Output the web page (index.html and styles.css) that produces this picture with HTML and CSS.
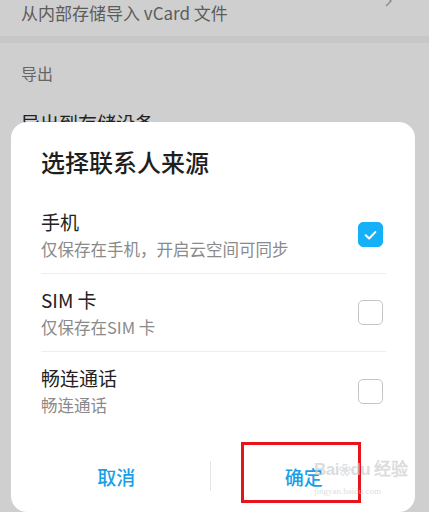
FILE: index.html
```html
<!DOCTYPE html>
<html lang="zh-CN">
<head>
    <meta charset="UTF-8">
    <meta name="viewport" content="width=device-width, initial-scale=1.0">
    <title>选择联系人来源</title>
    <link rel="stylesheet" href="styles.css">
</head>
<body>
    <div class="page">
        <div class="list-item import-row">
            <span>从内部存储导入 vCard 文件</span>
            <svg class="chevron" width="10" height="10" viewBox="0 0 10 10">
                <path d="M2 -4 L7 1 L2 6" fill="none" stroke="#8a8a8a" stroke-width="1.4"/>
            </svg>
        </div>
        <div class="gap-strip"></div>
        <div class="section-label">导出</div>
        <div class="list-item export-row">导出到存储设备</div>
    </div>

    <div class="dialog">
        <div class="dialog-title">选择联系人来源</div>

        <div class="option">
            <div class="option-text">
                <div class="option-name">手机</div>
                <div class="option-desc">仅保存在手机，开启云空间可同步</div>
            </div>
            <span class="checkbox checked">
                <svg width="24" height="24" viewBox="0 0 24 24">
                    <path d="M7 12.3 L10.6 15.6 L17 9" fill="none" stroke="#fff" stroke-width="2.2" stroke-linecap="round" stroke-linejoin="round"/>
                </svg>
            </span>
        </div>

        <div class="option">
            <div class="option-text">
                <div class="option-name">SIM 卡</div>
                <div class="option-desc">仅保存在SIM 卡</div>
            </div>
            <span class="checkbox"></span>
        </div>

        <div class="option last">
            <div class="option-text">
                <div class="option-name">畅连通话</div>
                <div class="option-desc">畅连通话</div>
            </div>
            <span class="checkbox"></span>
        </div>

        <div class="dialog-footer">
            <button class="dialog-btn">取消</button>
            <span class="btn-divider"></span>
            <button class="dialog-btn">确定</button>
        </div>
    </div>

    <div class="highlight"></div>
    <div class="watermark">
        <div class="wm-logo">Bai<span class="paw">❀</span>du 经验</div>
        <div class="wm-url">jingyan.baidu.com</div>
    </div>
</body>
</html>
```

FILE: styles.css
```css
body {
    margin: 0;
    font-family: "Noto Sans CJK SC", "Noto Sans", sans-serif;
    background-color: #cfcfcf;
    width: 429px;
    height: 512px;
    overflow: hidden;
    position: relative;
}
.page {
    display: flex;
    flex-direction: column;
}
.list-item {
    padding: 0 21px;
    display: flex;
    align-items: center;
    justify-content: space-between;
}
.import-row {
    height: 36px;
    font-size: 17px;
    color: #5c5c5c;
    margin-top: -6px;
    padding-bottom: 6px;
    box-sizing: content-box;
}
.chevron {
    align-self: flex-start;
    margin-top: 6px;
    margin-right: 14px;
}
.gap-strip {
    height: 7px;
    background-color: #c7c7c7;
}
.section-label {
    padding: 0 21px;
    height: 50px;
    line-height: 50px;
    margin-top: 5px;
    font-size: 16px;
    color: #666;
}
.export-row {
    height: 36px;
    font-size: 19px;
    color: #222;
    margin-top: 6px;
}
.dialog {
    position: absolute;
    left: 11px;
    top: 122px;
    width: 404px;
    height: 390px;
    background-color: #fff;
    border-radius: 16px;
    box-sizing: border-box;
    padding: 0 29px 0 30px;
    display: flex;
    flex-direction: column;
}
.dialog-title {
    padding-top: 24px;
    height: 32px;
    line-height: 32px;
    margin-bottom: 18px;
    font-size: 24px;
    color: #1e1e1e;
    font-weight: 500;
}
.option {
    height: 78px;
    box-sizing: border-box;
    border-bottom: 1px solid #eeeeee;
    display: flex;
    align-items: center;
    justify-content: space-between;
}
.option.last {
    border-bottom: none;
}
.option-name {
    font-size: 19px;
    line-height: 24px;
    color: #222;
}
.option-desc {
    margin-top: 4px;
    font-size: 16.5px;
    line-height: 22px;
    color: #8a8a8a;
}
.checkbox {
    width: 25px;
    height: 25px;
    box-sizing: border-box;
    border: 1.5px solid #c4c4c4;
    border-radius: 5px;
    margin-right: 3px;
    display: flex;
    align-items: center;
    justify-content: center;
}
.checkbox.checked {
    background-color: #14b0f8;
    border-color: #14b0f8;
}
.dialog-footer {
    display: flex;
    align-items: center;
    margin: 16px -11px 0 -18px;
    height: 60px;
}
.dialog-btn {
    flex: 1;
    background: none;
    border: none;
    font-family: inherit;
    font-size: 19px;
    font-weight: 500;
    color: #1a9fe6;
    padding: 0;
    cursor: pointer;
}
.btn-divider {
    width: 1px;
    height: 30px;
    background-color: #e4e4e4;
}
.highlight {
    position: absolute;
    left: 241px;
    top: 442px;
    width: 120px;
    height: 61px;
    box-sizing: border-box;
    border: 3px solid #e8141c;
}
.watermark {
    position: absolute;
    left: 314px;
    top: 460px;
    color: rgba(205, 205, 205, 0.7);
    font-family: "Liberation Sans", sans-serif;
}
.wm-logo {
    font-size: 17px;
    font-weight: bold;
    line-height: 20px;
    letter-spacing: -0.5px;
}
.paw {
    font-size: 12px;
}
.wm-url {
    font-size: 9px;
    line-height: 12px;
    margin-top: 4px;
    font-family: "Liberation Serif", serif;
}
```
